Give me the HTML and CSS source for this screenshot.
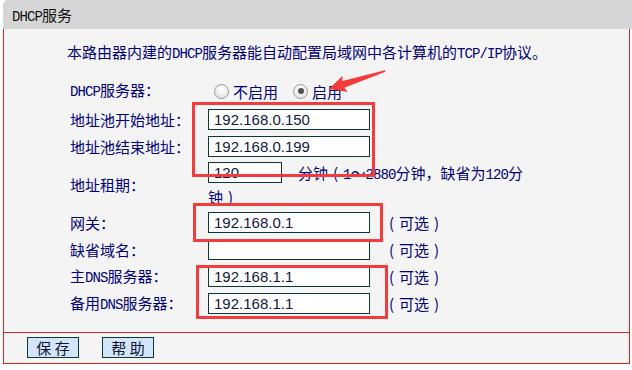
FILE: index.html
```html
<!DOCTYPE html>
<html lang="zh-CN">
<head>
<meta charset="utf-8">
<title>DHCP服务</title>
<link rel="stylesheet" href="styles.css">
</head>
<body>
<div class="page">
  <div class="header"><span class="en">DHCP</span>服务</div>
  <div class="panel">
    <div class="content">
      <p class="intro">本路由器内建的<span class="en">DHCP</span>服务器能自动配置局域网中各计算机的<span class="en">TCP/IP</span>协议。</p>
      <div class="row row-dhcp">
        <div class="label"><span class="en">DHCP</span>服务器：</div>
        <div class="field radios">
          <span class="radio"></span><span class="radio-text">不启用</span>
          <span class="radio checked"></span><span class="radio-text">启用</span>
        </div>
      </div>
      <div class="row">
        <div class="label">地址池开始地址：</div>
        <div class="field"><span class="input">192.168.0.150</span></div>
      </div>
      <div class="row">
        <div class="label">地址池结束地址：</div>
        <div class="field"><span class="input">192.168.0.199</span></div>
      </div>
      <div class="row row-lease">
        <div class="label">地址租期：</div>
        <div class="field lease">
          <div class="lease-line"><span class="input short">120</span><span class="unit">分钟<span class="par">(</span><span class="en">1</span><span class="tilde">～</span><span class="en">2880</span>分钟，缺省为<span class="en">120</span>分</span></div>
          <div class="lease-line">钟<span class="par">)</span></div>
        </div>
      </div>
      <div class="row">
        <div class="label">网关：</div>
        <div class="field"><span class="input">192.168.0.1</span><span class="opt"><span class="par">(</span>可选<span class="par">)</span></span></div>
      </div>
      <div class="row">
        <div class="label">缺省域名：</div>
        <div class="field"><span class="input"></span><span class="opt"><span class="par">(</span>可选<span class="par">)</span></span></div>
      </div>
      <div class="row">
        <div class="label">主<span class="en">DNS</span>服务器：</div>
        <div class="field"><span class="input">192.168.1.1</span><span class="opt"><span class="par">(</span>可选<span class="par">)</span></span></div>
      </div>
      <div class="row">
        <div class="label">备用<span class="en">DNS</span>服务器：</div>
        <div class="field"><span class="input">192.168.1.1</span><span class="opt"><span class="par">(</span>可选<span class="par">)</span></span></div>
      </div>
    </div>
    <div class="footer">
      <span class="btn">保 存</span>
      <span class="btn">帮 助</span>
    </div>
  </div>
</div>
<svg class="overlay" width="632" height="370" viewBox="0 0 632 370">
  <rect x="193.5" y="103.5" width="180" height="72" fill="none" stroke="#f43c3c" stroke-width="3"/>
  <rect x="194.5" y="204.5" width="187" height="36" fill="none" stroke="#f43c3c" stroke-width="3"/>
  <rect x="197.5" y="266.5" width="189" height="51" fill="none" stroke="#f43c3c" stroke-width="3"/>
  <g transform="translate(329 89) rotate(-17.8)">
    <polygon points="0,0 17,-8.5 15,-3.5 59,-0.8 59,0.8 15,3.5 17,8.5" fill="#f43c3c"/>
  </g>
</svg>
</body>
</html>
```

FILE: styles.css
```css
html, body {
  margin: 0;
  padding: 0;
  background: #ffffff;
}

body {
  width: 632px;
  height: 370px;
  overflow: hidden;
  position: relative;
  font-family: "Noto Sans CJK SC", sans-serif;
  font-size: 15px;
  color: #00007a;
}

.en {
  font-family: "Liberation Mono", monospace;
  font-size: 14px;
  letter-spacing: -0.9px;
}

.par,
.tilde {
  display: inline-block;
  width: 15px;
  text-align: center;
}

.page {
  padding-left: 3px;
}

.header {
  width: 629px;
  height: 29px;
  box-sizing: border-box;
  padding-left: 9px;
  line-height: 29px;
  background: #d6d6d6;
  border-top-left-radius: 5px;
  color: #111111;
}

.panel {
  width: 627px;
  box-sizing: border-box;
  background: #f4f4f4;
  border-left: 1px solid #d8231b;
  border-right: 1px solid #d8231b;
  border-bottom: 1px solid #d8231b;
}

.content {
  padding: 13px 0 15px 66px;
  border-bottom: 1px solid #d8231b;
}

.intro {
  margin: 0 0 16px -3px;
  height: 20px;
  line-height: 20px;
  white-space: nowrap;
}

.row {
  display: flex;
  align-items: center;
  height: 27px;
}

.row-dhcp {
  height: 28px;
  padding-bottom: 2px;
  box-sizing: border-box;
}

.row-lease {
  height: 49px;
}

.label {
  width: 138px;
  flex: none;
  white-space: nowrap;
  line-height: 21px;
}

.field {
  display: flex;
  align-items: center;
  white-space: nowrap;
}

.input {
  display: inline-block;
  width: 162px;
  height: 21px;
  box-sizing: border-box;
  border: 1px solid #0b3a36;
  background: #ffffff;
  padding: 0 5px;
  font-family: "Liberation Sans", Arial, sans-serif;
  font-size: 15px;
  line-height: 19px;
  color: #101840;
}

.input.short {
  width: 74px;
}

.opt {
  margin-left: 14px;
}

.lease {
  flex-direction: column;
  align-items: flex-start;
}

.lease-line {
  display: flex;
  align-items: center;
  height: 24px;
  white-space: nowrap;
}

.unit {
  margin-left: 16px;
}

.radio {
  display: inline-block;
  width: 15px;
  height: 15px;
  box-sizing: border-box;
  border-radius: 50%;
  border: 1px solid #9a9a9a;
  background: radial-gradient(circle at 50% 35%, #ffffff 0%, #ececec 60%, #d4d4d4 100%);
  position: relative;
  margin-left: 6px;
}

.radio.checked {
  margin-left: 15px;
}

.radio.checked::after {
  content: "";
  position: absolute;
  left: 3.5px;
  top: 3.5px;
  width: 6px;
  height: 6px;
  border-radius: 50%;
  background: #505050;
}

.radio-text {
  margin-left: 4px;
}

.footer {
  height: 30px;
  box-sizing: border-box;
  padding: 4px 0 0 23px;
  display: flex;
  gap: 23px;
  align-items: flex-start;
}

.btn {
  display: inline-block;
  width: 52px;
  height: 21px;
  box-sizing: border-box;
  border: 1px solid #0b3a36;
  background: #d3e5fb;
  text-align: center;
  line-height: 19px;
  color: #111133;
  font-size: 15px;
}

.overlay {
  position: absolute;
  left: 0;
  top: 0;
  pointer-events: none;
}
```
